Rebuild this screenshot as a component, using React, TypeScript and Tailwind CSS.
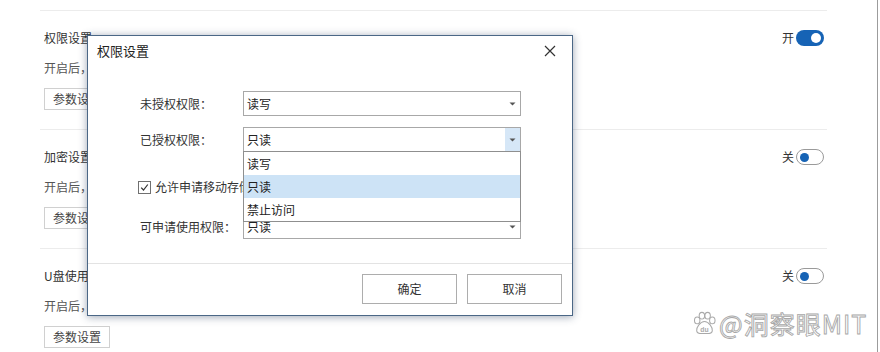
import React from 'react';

const FONT = 'font-["Microsoft_YaHei","Noto_Sans_CJK_SC",sans-serif]';

type Section = { title: string; desc: string; on: boolean };

const SECTIONS: Section[] = [
  { title: '权限设置', desc: '开启后，未授权的移动存储设备将按照设置的权限使用', on: true },
  { title: '加密设置', desc: '开启后，拷贝到移动存储设备的文件将自动加密', on: false },
  { title: 'U盘使用记录', desc: '开启后，记录移动存储设备的插拔及文件操作', on: false },
];

function Toggle({ on }: { on: boolean }) {
  return (
    <div className="flex items-center gap-[2px] text-[12px] leading-[16px] text-[#333]">
      <span>{on ? '开' : '关'}</span>
      {on ? (
        <div className="flex h-[16px] w-[28px] items-center justify-end rounded-full bg-[#1663b5] pr-[3px]">
          <div className="h-[10px] w-[10px] rounded-full bg-white" />
        </div>
      ) : (
        <div className="flex h-[16px] w-[28px] items-center rounded-full border border-[#9a9a9a] bg-white pl-[3px]">
          <div className="h-[9px] w-[9px] rounded-full bg-[#1663b5]" />
        </div>
      )}
    </div>
  );
}

function Caret() {
  return (
    <svg width="7" height="4" viewBox="0 0 7 4">
      <path d="M0.5 0.5 L6.5 0.5 L3.5 3.5 Z" fill="#555" />
    </svg>
  );
}

function SelectBox({ value, active }: { value: string; active?: boolean }) {
  return (
    <div className="flex h-[25px] w-[278px] items-stretch border border-[#a8a8a8] bg-white">
      <div className="flex flex-1 items-center pl-[3px] text-[12px] text-[#222]">{value}</div>
      <div className={`flex w-[15px] items-center justify-center ${active ? 'bg-[#d6e7f7]' : ''}`}>
        <Caret />
      </div>
    </div>
  );
}

function Watermark() {
  return (
    <div className="absolute left-[692px] top-[309px] flex items-center gap-[2px]">
      <svg width="25" height="25" viewBox="0 0 24 24">
        <g fill="#fff" stroke="#a9a9a9" strokeWidth="1">
          <ellipse cx="5" cy="9" rx="2.6" ry="3.2" />
          <ellipse cx="9.5" cy="4.5" rx="2.6" ry="3.2" />
          <ellipse cx="15" cy="4.5" rx="2.6" ry="3.2" />
          <ellipse cx="19.5" cy="9" rx="2.6" ry="3.2" />
          <path d="M12 10 C8 10 4 16 4.5 19 C5 22 8 22 12 21.5 C16 22 19 22 19.5 19 C20 16 16 10 12 10 Z" />
        </g>
        <text x="12" y="20" textAnchor="middle" fontSize="6.5" fill="#a9a9a9" fontFamily="Liberation Sans, sans-serif" fontWeight="700">du</text>
      </svg>
      <span className='font-["Noto_Sans_CJK_SC",sans-serif] text-[25px] leading-[28px] tracking-[1px] text-white [-webkit-text-stroke:0.9px_#a8a8a8]'>
        @洞察眼MIT
      </span>
    </div>
  );
}

function Dialog() {
  return (
    <div className="absolute left-[87px] top-[35px] flex h-[281px] w-[486px] flex-col border border-[#4b6786] bg-white shadow-[0_1px_8px_rgba(40,60,90,0.45)]">
      <div className="flex h-[30px] items-center justify-between pl-[9px] pr-[16px]">
        <span className="text-[13px] text-[#222]">权限设置</span>
        <svg width="12" height="12" viewBox="0 0 12 12">
          <path d="M1 1 L11 11 M11 1 L1 11" stroke="#333" strokeWidth="1.2" />
        </svg>
      </div>

      <div className="flex flex-1 flex-col pl-[52px] pt-[25px] text-[12px] text-[#333]">
        <div className="flex items-center">
          <span className="w-[103px]">未授权权限：</span>
          <SelectBox value="读写" />
        </div>

        <div className="mt-[11px] flex items-center">
          <span className="w-[103px]">已授权权限：</span>
          <div className="relative">
            <SelectBox value="只读" active />
            <div className="absolute left-0 top-[24px] z-10 w-[278px] border border-[#8f8f8f] bg-white text-[12px] text-[#222]">
              <div className="flex h-[23px] items-center pl-[3px]">读写</div>
              <div className="flex h-[23px] items-center bg-[#cde3f6] pl-[3px]">只读</div>
              <div className="flex h-[23px] items-center pl-[3px]">禁止访问</div>
            </div>
          </div>
        </div>

        <div className="-ml-[2px] mt-[27px] flex h-[16px] items-center gap-[4px]">
          <div className="flex h-[13px] w-[13px] shrink-0 items-center justify-center border border-[#707070] bg-white">
            <svg width="9" height="9" viewBox="0 0 9 9">
              <path d="M1.2 4.6 L3.5 7 L7.8 1.5" fill="none" stroke="#333" strokeWidth="1.2" />
            </svg>
          </div>
          <span className="w-[88px] overflow-hidden whitespace-nowrap">允许申请移动存储设备使用权限</span>
        </div>

        <div className="mt-[19px] flex items-center">
          <span className="w-[103px]">可申请使用权限：</span>
          <SelectBox value="只读" />
        </div>
      </div>

      <div className="flex h-[52px] items-start justify-end gap-[10px] border-t border-[#e3e3e3] pr-[10px] pt-[10px]">
        <button className="h-[30px] w-[95px] border border-[#adadad] bg-white text-[12px] text-[#333]">确定</button>
        <button className="h-[30px] w-[95px] border border-[#adadad] bg-white text-[12px] text-[#333]">取消</button>
      </div>
    </div>
  );
}

export default function App() {
  return (
    <div className={`relative h-[352px] w-[880px] overflow-hidden bg-white ${FONT}`}>
      <div className="h-full w-[878px] border-r border-[#9c9c9c] pl-[40px] pr-[50px] pt-[10px]">
        {SECTIONS.map((s) => (
          <div key={s.title} className="border-t border-[#ececec] pb-[19px] pl-[4px] pr-[3px] pt-[19px]">
            <div className="flex items-center justify-between">
              <span className="text-[12px] leading-[16px] text-[#333]">{s.title}</span>
              <Toggle on={s.on} />
            </div>
            <div className="mt-[14px] text-[12px] leading-[16px] text-[#555]">{s.desc}</div>
            <button className="mt-[12px] h-[22px] w-[66px] border border-[#d0d0d0] bg-white text-[12px] text-[#444]">
              参数设置
            </button>
          </div>
        ))}
      </div>

      <Dialog />
      <Watermark />
    </div>
  );
}
